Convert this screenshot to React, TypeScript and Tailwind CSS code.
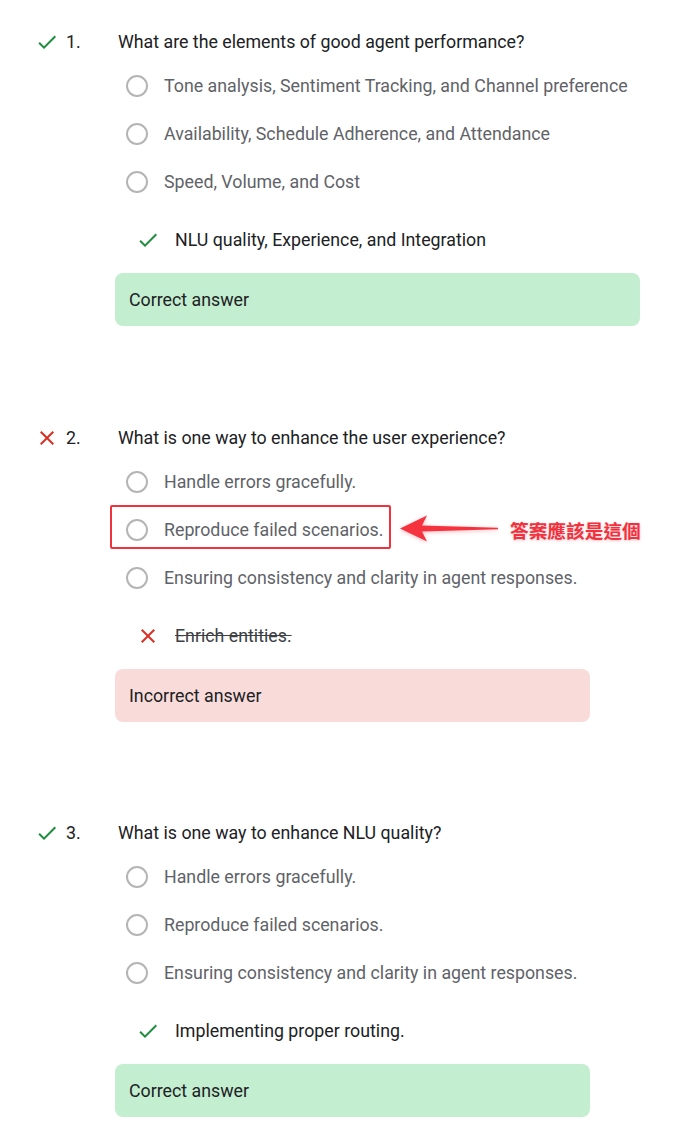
import React from 'react';

type Question = {
  num: number;
  text: string;
  correct: boolean;
  options: string[];
  answer: string;
  boxWidth: string;
  gap: string;
};

const questions: Question[] = [
  {
    num: 1,
    text: 'What are the elements of good agent performance?',
    correct: true,
    options: [
      'Tone analysis, Sentiment Tracking, and Channel preference',
      'Availability, Schedule Adherence, and Attendance',
      'Speed, Volume, and Cost',
    ],
    answer: 'NLU quality, Experience, and Integration',
    boxWidth: 'w-[525px]',
    gap: 'mb-[100px]',
  },
  {
    num: 2,
    text: 'What is one way to enhance the user experience?',
    correct: false,
    options: [
      'Handle errors gracefully.',
      'Reproduce failed scenarios.',
      'Ensuring consistency and clarity in agent responses.',
    ],
    answer: 'Enrich entities.',
    boxWidth: 'w-[475px]',
    gap: 'mb-[99px]',
  },
  {
    num: 3,
    text: 'What is one way to enhance NLU quality?',
    correct: true,
    options: [
      'Handle errors gracefully.',
      'Reproduce failed scenarios.',
      'Ensuring consistency and clarity in agent responses.',
    ],
    answer: 'Implementing proper routing.',
    boxWidth: 'w-[475px]',
    gap: 'mb-0',
  },
];

function CheckIcon() {
  return (
    <svg viewBox="0 0 24 24" className="w-6 h-6 shrink-0 fill-[#1e8e3e]">
      <path d="M9 16.17L4.83 12l-1.42 1.41L9 19 21 7l-1.41-1.41z" />
    </svg>
  );
}

function CrossIcon() {
  return (
    <svg viewBox="0 0 24 24" className="w-6 h-6 shrink-0 fill-[#d93025]">
      <path d="M19 6.41L17.59 5 12 10.59 6.41 5 5 6.41 10.59 12 5 17.59 6.41 19 12 13.41 17.59 19 19 17.59 13.41 12z" />
    </svg>
  );
}

// red callout pointing at the right answer
function Callout() {
  return (
    <>
      <div className="absolute left-[-16px] top-[-1px] w-[281px] h-[44px] border-2 border-[#f0323f] rounded-[2px]" />
      <svg
        viewBox="0 0 100 30"
        className="absolute left-[272px] top-[8px] w-[100px] h-[30px] drop-shadow-[0_1px_2px_rgba(240,50,63,0.35)]"
      >
        <polygon
          points="2,14.5 29,1.5 24,11.5 100,13.8 100,15.2 24,17.5 29,27.5"
          fill="#f5333f"
        />
      </svg>
      <div className="absolute left-[384px] top-0 h-12 flex items-center text-[18.7px] font-bold text-[#f0323f] whitespace-nowrap [font-family:'Noto_Sans_CJK_TC',sans-serif] [text-shadow:0_1px_3px_rgba(240,50,63,0.3)]">
        答案應該是這個
      </div>
    </>
  );
}

function QuestionBlock({ q }: { q: Question }) {
  return (
    <div className={q.gap}>
      <div className="flex items-center h-6">
        {q.correct ? <CheckIcon /> : <CrossIcon />}
        <span className="ml-[7px] w-[52px] text-[#202124]">{q.num}.</span>
        <span className="text-[#202124] whitespace-nowrap">{q.text}</span>
      </div>

      <div className="mt-2 ml-[91px]">
        {q.options.map((opt, i) => (
          <div key={opt} className="relative flex items-center h-12">
            <span className="w-[22px] h-[22px] rounded-full border-2 border-[#b5b5b5] shrink-0" />
            <span className="ml-4 text-[#5f6368] whitespace-nowrap">{opt}</span>
            {q.num === 2 && i === 1 && <Callout />}
          </div>
        ))}
      </div>

      <div className="mt-[10px] ml-[101px] flex items-center h-12">
        {q.correct ? <CheckIcon /> : <CrossIcon />}
        <span className={q.correct ? 'ml-[15px] text-[#202124]' : 'ml-[15px] text-[#3c4043] line-through'}>
          {q.answer}
        </span>
      </div>

      <div
        className={`mt-[9px] ml-[80px] h-[53px] ${q.boxWidth} rounded-lg flex items-center pl-[14px] text-[#202124] ${
          q.correct ? 'bg-[#c4eed0]' : 'bg-[#f9dcd9]'
        }`}
      >
        {q.correct ? 'Correct answer' : 'Incorrect answer'}
      </div>
    </div>
  );
}

export default function App() {
  return (
    <div className="min-h-[1141px] bg-white pl-[35px] pt-[30px] text-[17.8px] leading-6 [font-family:Roboto,'Noto_Sans',sans-serif]">
      {questions.map((q) => (
        <QuestionBlock key={q.num} q={q} />
      ))}
    </div>
  );
}
